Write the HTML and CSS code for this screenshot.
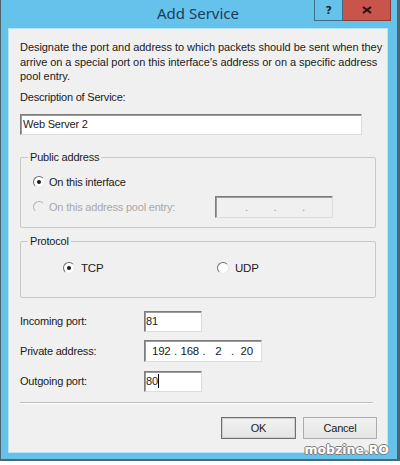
FILE: index.html
```html
<!DOCTYPE HTML>
<html lang="en">
<head>
<meta charset="utf-8">
<title>Add Service</title>
<link rel="stylesheet" href="styles.css">
</head>
<body>

<div class="window">
  <div class="titlebar">
    <div class="title">Add Service</div>
    <div class="caption-buttons">
      <span class="cap-btn help">?</span>
      <span class="cap-btn close">
        <svg width="10" height="8" viewBox="0 0 10 8"><path d="M1 1 L9 7 M9 1 L1 7" stroke="#2a0d0b" stroke-width="2" fill="none"/></svg>
      </span>
    </div>
  </div>

  <div class="client">
    <p class="intro">Designate the port and address to which packets should be sent when they<br>arrive on a special port on this interface's address or on a specific address<br>pool entry.</p>

    <div class="label">Description of Service:</div>
    <div class="textbox wide">Web Server 2</div>

    <fieldset class="group public">
      <legend>Public address</legend>
      <div class="radio-row">
        <span class="radio checked"></span>
        <span>On this interface</span>
      </div>
      <div class="radio-row pool disabled">
        <span class="radio"></span>
        <span class="pool-label">On this address pool entry:</span>
        <div class="ipbox off">
          <span class="octet"></span><span class="dot">.</span>
          <span class="octet"></span><span class="dot">.</span>
          <span class="octet"></span><span class="dot">.</span>
          <span class="octet"></span>
        </div>
      </div>
    </fieldset>

    <fieldset class="group protocol">
      <legend>Protocol</legend>
      <div class="proto-row">
        <div class="option">
          <span class="radio checked"></span>
          <span>TCP</span>
        </div>
        <div class="option">
          <span class="radio"></span>
          <span>UDP</span>
        </div>
      </div>
    </fieldset>

    <div class="fields">
      <span>Incoming port:</span>
      <div class="textbox port">81</div>
      <span>Private address:</span>
      <div class="ipbox">
        <span class="octet">192</span><span class="dot">.</span>
        <span class="octet">168</span><span class="dot">.</span>
        <span class="octet">2</span><span class="dot">.</span>
        <span class="octet">20</span>
      </div>
      <span>Outgoing port:</span>
      <div class="textbox port">80<span class="caret"></span></div>
    </div>

    <div class="separator"></div>

    <div class="buttons">
      <span class="btn default">OK</span>
      <span class="btn cancel">Cancel</span>
    </div>
  </div>

  <div class="watermark">mobzine.RO</div>
</div>

</body>
</html>
```

FILE: styles.css
```css
/* Page */
body {
  margin: 0;
  background: #ffffff;
  font-family: "Liberation Sans", Arial, sans-serif;
  font-size: 11px;
  letter-spacing: -0.2px;
  color: #1b1b1b;
}

/* Window frame */
.window {
  position: relative;
  box-sizing: border-box;
  width: 400px;
  height: 461px;
  background: #65c3eb;
  border-style: solid;
  border-color: #4f6570;
  border-width: 0 3px 2px 1px;
  padding: 0 10px 7px 8px;
  display: flex;
  flex-direction: column;
}

.titlebar {
  height: 29px;
  display: grid;
}

.title,
.caption-buttons {
  grid-area: 1 / 1;
}

.title {
  text-align: center;
  font-family: "Noto Sans", sans-serif;
  font-size: 15px;
  letter-spacing: 0;
  line-height: 27px;
  color: #1f3b58;
}

.caption-buttons {
  justify-self: end;
  align-self: start;
  display: flex;
  margin-right: -4px;
}

.cap-btn {
  box-sizing: border-box;
  height: 21px;
  display: flex;
  align-items: center;
  justify-content: center;
}

.help {
  width: 29px;
  border: 1px solid #3f6f88;
  border-top: 0;
  font-family: "DejaVu Sans", sans-serif;
  font-weight: bold;
  font-size: 11px;
  color: #14283c;
}

.close {
  width: 48px;
  background: #c8544c;
  border-right: 1px solid #8e3a34;
  border-bottom: 1px solid #8e3a34;
}

/* Dialog body */
.client {
  flex: 1;
  background: #f0f0f0;
  padding: 11px 11px 13px 11px;
  box-shadow: 0 0 0 1px #b8e4f5;
}

.intro {
  margin: 0 0 6.5px;
  font-size: 11px;
  letter-spacing: -0.05px;
  line-height: 14.5px;
  white-space: nowrap;
}

.label {
  line-height: 14px;
  margin-bottom: 10px;
}

.textbox {
  box-sizing: border-box;
  height: 21px;
  background: #ffffff;
  border: 1px solid;
  border-color: #7d7d7d #dcdcdc #dcdcdc #7d7d7d;
  box-shadow: inset 1px 1px 0 #9a9a9a;
  padding-left: 2px;
  line-height: 19px;
  display: flex;
  align-items: center;
}

.textbox.wide {
  width: 342px;
}

.textbox.port {
  width: 58px;
  padding-left: 1px;
}

.caret {
  width: 1px;
  height: 14px;
  background: #000000;
}

/* Group boxes */
.group {
  margin: 15px 0 0;
  padding: 8px 0 9px 7px;
  border: 1px solid #c8c8c8;
  border-radius: 2px;
  min-width: 0;
}

.group legend {
  padding: 0 2px;
  line-height: 14px;
}

.protocol {
  margin-top: 6px;
  padding: 10px 0 19px 7px;
}

.radio-row {
  display: flex;
  align-items: center;
  gap: 4px;
  height: 20px;
  margin-left: 5px;
}

.radio-row.pool {
  height: 22px;
  margin-top: 4px;
}

.radio {
  box-sizing: border-box;
  width: 12px;
  height: 12px;
  border-radius: 50%;
  border: 1px solid;
  border-color: #6e6e6e #e8e8e8 #e8e8e8 #6e6e6e;
  background: #ffffff;
  display: flex;
  align-items: center;
  justify-content: center;
}

.radio.checked::after {
  content: "";
  width: 4px;
  height: 4px;
  border-radius: 50%;
  background: #1a1a1a;
}

.disabled {
  color: #a8a8a8;
}

.disabled .radio {
  border-color: #b4b4b4 #f4f4f4 #f4f4f4 #b4b4b4;
  background: #f0f0f0;
}

.pool-label {
  width: 162px;
}

.proto-row {
  display: grid;
  grid-template-columns: 154px auto;
  height: 20px;
  padding-left: 35px;
}

.option {
  display: flex;
  align-items: center;
  gap: 6px;
  font-size: 11.5px;
}

/* IP address control */
.ipbox {
  box-sizing: border-box;
  width: 118px;
  height: 22px;
  background: #ffffff;
  border: 1px solid;
  border-color: #7d7d7d #dcdcdc #dcdcdc #7d7d7d;
  box-shadow: inset 1px 1px 0 #9a9a9a;
  padding: 0 2px 0 4px;
  display: flex;
  align-items: center;
  font-size: 11.5px;
}

.ipbox.off {
  background: #f0f0f0;
  color: #9c9c9c;
}

.octet {
  flex: 1;
  text-align: center;
}

.dot {
  width: 4px;
  text-align: center;
}

/* Port fields */
.fields {
  margin-top: 12px;
  display: grid;
  grid-template-columns: 124px auto;
  grid-auto-rows: 22px;
  row-gap: 8px;
  align-items: center;
  justify-items: start;
}

.separator {
  margin: 10px 3px 0 0;
  border-top: 1px solid #bcbcbc;
  border-bottom: 1px solid #ffffff;
}

.buttons {
  margin: 13px -1px 0 0;
  display: flex;
  justify-content: flex-end;
  gap: 7px;
}

.btn {
  box-sizing: border-box;
  width: 74px;
  height: 22px;
  border: 1px solid #adadad;
  background: linear-gradient(#f2f2f2, #e4e4e4);
  display: flex;
  align-items: center;
  justify-content: center;
  font-size: 11px;
}

.btn.default {
  width: 75px;
  border-color: #6f6f6f;
  box-shadow: inset 0 0 0 1px #cfcfcf;
}

/* Watermark over the frame */
.watermark {
  position: absolute;
  right: 8px;
  bottom: 2px;
  font-family: "DejaVu Sans", sans-serif;
  font-weight: bold;
  font-size: 12.5px;
  letter-spacing: 0;
  line-height: 14px;
  color: #ffffff;
  text-shadow: 1px 0 0 #7b7b7b, -1px 0 0 #7b7b7b, 0 1px 0 #7b7b7b, 0 -1px 0 #7b7b7b;
}
```
